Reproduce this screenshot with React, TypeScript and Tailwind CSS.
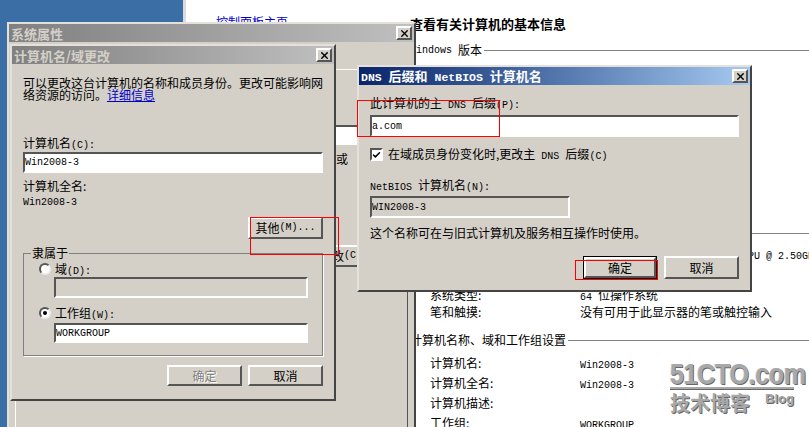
import type { ReactNode } from 'react'
import { X, Check } from 'lucide-react'

const raised = 'border-2 border-t-white border-l-white border-r-[#555] border-b-[#555] bg-[#d4d0c8]'
const sunken = 'border-2 border-t-[#555] border-l-[#555] border-r-white border-b-white'
const windowEdge = 'border-2 border-t-[#e4e1da] border-l-[#e4e1da] border-r-[#444] border-b-[#444] bg-[#d4d0c8]'

// latin text sits in a half-width mono, cjk stays at 12px
function M({ children, big }: { children: ReactNode; big?: boolean }) {
  return <span className={`[font-family:'Liberation_Mono',monospace] whitespace-pre ${big ? 'text-[11.5px]' : 'text-[10px]'}`}>{children}</span>
}

function CloseButton() {
  return (
    <button className={`${raised} w-[16px] h-[14px] flex items-center justify-center`}>
      <X size={11} strokeWidth={3} className="text-black" />
    </button>
  )
}

function TitleBar({ children, active }: { children: ReactNode; active?: boolean }) {
  return (
    <div className={`h-[18px] flex items-center justify-between pl-[2px] pr-[2px] text-[13px] font-bold leading-none ${active ? 'bg-gradient-to-r from-[#0a246a] to-[#a6caf0] text-white' : 'bg-gradient-to-r from-[#808080] to-[#c0c0c0] text-[#d4d0c8]'}`}>
      <span className="whitespace-pre">{children}</span>
      <CloseButton />
    </div>
  )
}

function Field({ value, className, disabled }: { value?: string; className: string; disabled?: boolean }) {
  return (
    <div className={`${sunken} ${className} ${disabled ? 'bg-[#d4d0c8]' : 'bg-white'} flex items-center`}>
      <M>{value}</M>
    </div>
  )
}

function DlgButton({ label, className, disabled }: { label: ReactNode; className: string; disabled?: boolean }) {
  return (
    <button className={`${raised} ${className} flex items-center justify-center text-[12px] leading-none ${disabled ? 'text-[#808080] [text-shadow:1px_1px_0_#fff]' : 'text-black'}`}>
      {label}
    </button>
  )
}

function Radio({ on }: { on?: boolean }) {
  return (
    <span className="w-[12px] h-[12px] rounded-full bg-white border-2 border-t-[#555] border-l-[#555] border-r-[#eee] border-b-[#eee] flex items-center justify-center shrink-0">
      {on && <span className="w-[4px] h-[4px] rounded-full bg-black" />}
    </span>
  )
}

function Section({ children, className }: { children: ReactNode; className: string }) {
  return (
    <div className={`flex items-center h-[16px] whitespace-nowrap ${className}`}>
      {children}
      <div className="flex-1 h-px bg-[#808080] ml-[2px]" />
    </div>
  )
}

function InfoRow({ label, value, className }: { label: string; value?: ReactNode; className: string }) {
  return (
    <div className={`flex items-center h-[16px] pl-[20px] whitespace-nowrap ${className}`}>
      <span className="w-[150px] shrink-0">{label}</span>
      <span>{value}</span>
    </div>
  )
}

function ControlPanel() {
  return (
    <div className="absolute left-[183px] top-0 right-0 bottom-0 bg-white border-l-[3px] border-l-[#dcdcdc] flex overflow-hidden">
      <aside className="w-[224px] shrink-0 pl-[30px] pt-[8px]">
        <a className="text-[#0000cc] underline text-[12px] leading-none">控制面板主页</a>
      </aside>
      <main className="flex-1 min-w-0 pt-[16px] text-[12px] text-black">
        <h2 className="h-[16px] flex items-center text-[13px] font-bold whitespace-nowrap">查看有关计算机的基本信息</h2>
        <Section className="mt-[10px]"><M>{'Windows '}</M>版本</Section>
        <Section className="mt-[167px]">系统</Section>
        <InfoRow className="mt-[5px]" label="处理器:" value={<M>{'Intel(R) Core(TM)2 Quad    CPU @ 2.50GHz'}</M>} />
        <InfoRow className="mt-[25px]" label="系统类型:" value={<><M>{'64 '}</M>位操作系统</>} />
        <InfoRow className="mt-px" label="笔和触摸:" value="没有可用于此显示器的笔或触控输入" />
        <Section className="mt-[12px]">计算机名称、域和工作组设置</Section>
        <InfoRow className="mt-[7px]" label="计算机名:" value={<M>Win2008-3</M>} />
        <InfoRow className="mt-[4px]" label="计算机全名:" value={<M>Win2008-3</M>} />
        <InfoRow className="mt-[4px]" label="计算机描述:" />
        <InfoRow className="mt-[4px]" label="工作组:" value={<M>WORKGROUP</M>} />
      </main>
    </div>
  )
}

function SystemProperties() {
  return (
    <div className={`absolute left-[7px] top-[22px] w-[409px] h-[430px] ${windowEdge} text-[12px] text-black`}>
      <TitleBar>系统属性</TitleBar>
      <div className="ml-[6px] mr-[6px] mt-[27px] h-[400px] border border-t-white border-l-white border-r-[#555] border-b-[#555] flex flex-col items-end pr-[8px]">
        <div className={`${sunken} bg-white w-[298px] h-[20px] mt-[55px]`} />
        <div className="w-[63px] mt-[7px] leading-[14px]">或</div>
        <DlgButton className="w-[98px] h-[22px] mt-[79px]" label={<>更改<M>(C)...</M></>} />
      </div>
    </div>
  )
}

function ComputerNameDialog() {
  return (
    <div className={`absolute left-[10px] top-[44px] w-[326px] h-[357px] ${windowEdge} text-[12px] text-black`}>
      <TitleBar>计算机名/域更改</TitleBar>
      <div className="px-[11px]">
        <p className="w-[301px] mt-[13px] leading-[12px]">
          可以更改这台计算机的名称和成员身份。更改可能影响网络资源的访问。<a className="text-[#0000cc] underline">详细信息</a>
        </p>
        <div className="mt-[35px] h-[14px] leading-[14px]">计算机名<M>(C):</M></div>
        <Field value="Win2008-3" className="w-[300px] h-[21px] mt-[2px]" />
        <div className="mt-[6px] h-[14px] leading-[14px]">计算机全名:</div>
        <div className="h-[14px] leading-[14px]"><M>Win2008-3</M></div>
        <div className="flex justify-end mt-[10px]">
          <DlgButton className="w-[75px] h-[22px]" label={<>其他<M>(M)...</M></>} />
        </div>
        <fieldset className="mt-[7px] w-[300px] h-[110px] border border-[#808080] shadow-[1px_1px_0_#fff] pl-[15px]">
          <legend className="ml-[-8px] px-[1px] leading-[14px]">隶属于</legend>
          <div className="flex items-center gap-[4px] h-[14px] mt-[2px]">
            <Radio />
            <span>域<M>(D):</M></span>
          </div>
          <Field disabled className="w-[254px] h-[21px] ml-[15px] mt-[1px]" />
          <div className="flex items-center gap-[4px] h-[14px] mt-[8px]">
            <Radio on />
            <span>工作组<M>(W):</M></span>
          </div>
          <Field value="WORKGROUP" className="w-[254px] h-[20px] ml-[15px] mt-[3px]" />
        </fieldset>
        <div className="flex justify-end gap-[6px] mt-[9px]">
          <DlgButton disabled className="w-[75px] h-[21px]" label="确定" />
          <DlgButton className="w-[75px] h-[21px]" label="取消" />
        </div>
      </div>
    </div>
  )
}

function DnsDialog() {
  return (
    <div className={`absolute left-[357px] top-[65px] w-[395px] h-[227px] ${windowEdge} text-[12px] text-black`}>
      <TitleBar active>
        <M big>{'DNS '}</M>后缀和<M big>{' NetBIOS '}</M>计算机名
      </TitleBar>
      <div className="px-[11px]">
        <div className="mt-[11px] h-[14px] leading-[14px]">此计算机的主<M>{' DNS '}</M>后缀<M>(P):</M></div>
        <Field value="a.com" className="w-[369px] h-[22px] mt-[5px]" />
        <div className="flex items-center gap-[5px] mt-[11px] h-[13px]">
          <span className={`${sunken} bg-white w-[13px] h-[13px] flex items-center justify-center shrink-0`}>
            <Check size={10} strokeWidth={4} className="text-black" />
          </span>
          <span className="whitespace-nowrap">在域成员身份变化时,更改主<M>{' DNS '}</M>后缀<M>(C)</M></span>
        </div>
        <div className="mt-[17px] h-[14px] leading-[14px]"><M>{'NetBIOS '}</M>计算机名<M>(N):</M></div>
        <Field value="WIN2008-3" className="w-[200px] h-[22px] mt-[4px]" disabled />
        <div className="mt-[8px] h-[14px] leading-[14px] whitespace-nowrap">这个名称可在与旧式计算机及服务相互操作时使用。</div>
        <div className="flex justify-end items-start gap-[7px] mt-[16px]">
          <div className="border border-black">
            <DlgButton className="w-[72px] h-[21px]" label="确定" />
          </div>
          <DlgButton className="w-[75px] h-[23px]" label="取消" />
        </div>
      </div>
    </div>
  )
}

function Watermark() {
  return (
    <div className="absolute left-[670px] top-[360px] w-[128px] text-[#a8a8a8] font-bold [font-family:'Liberation_Sans',sans-serif]">
      <div className="text-[30px] leading-[27px] tracking-[-0.5px] whitespace-nowrap origin-left scale-x-[0.84] [text-shadow:1px_1px_0_#666,-1px_0_0_#ccc]">51CTO.com</div>
      <div className="h-[3px] w-[124px] bg-[#a8a8a8] border-b border-[#666]" />
      <div className="flex items-start mt-[2px]">
        <span className="text-[20px] leading-[22px] whitespace-nowrap [font-family:'Noto_Sans_CJK_SC',sans-serif] [text-shadow:1px_1px_0_#666]">技术博客</span>
        <span className="text-[13px] leading-[14px] ml-[15px] [text-shadow:1px_1px_0_#666]">Blog</span>
      </div>
    </div>
  )
}

export default function App() {
  return (
    <div className="relative w-[809px] h-[427px] overflow-hidden bg-[#3a6ea5] [font-family:'Noto_Sans_CJK_SC',sans-serif]">
      <ControlPanel />
      <SystemProperties />
      <ComputerNameDialog />
      <DnsDialog />
      <Watermark />
      {/* red marks drawn over the screenshot */}
      <div className="absolute left-[250px] top-[217px] w-[89px] h-[38px] border border-[#f00]" />
      <div className="absolute left-[357px] top-[100px] w-[143px] h-[37px] border border-[#f00]" />
      <div className="absolute left-[575px] top-[260px] w-[83px] h-[20px] border border-[#f00]" />
    </div>
  )
}
